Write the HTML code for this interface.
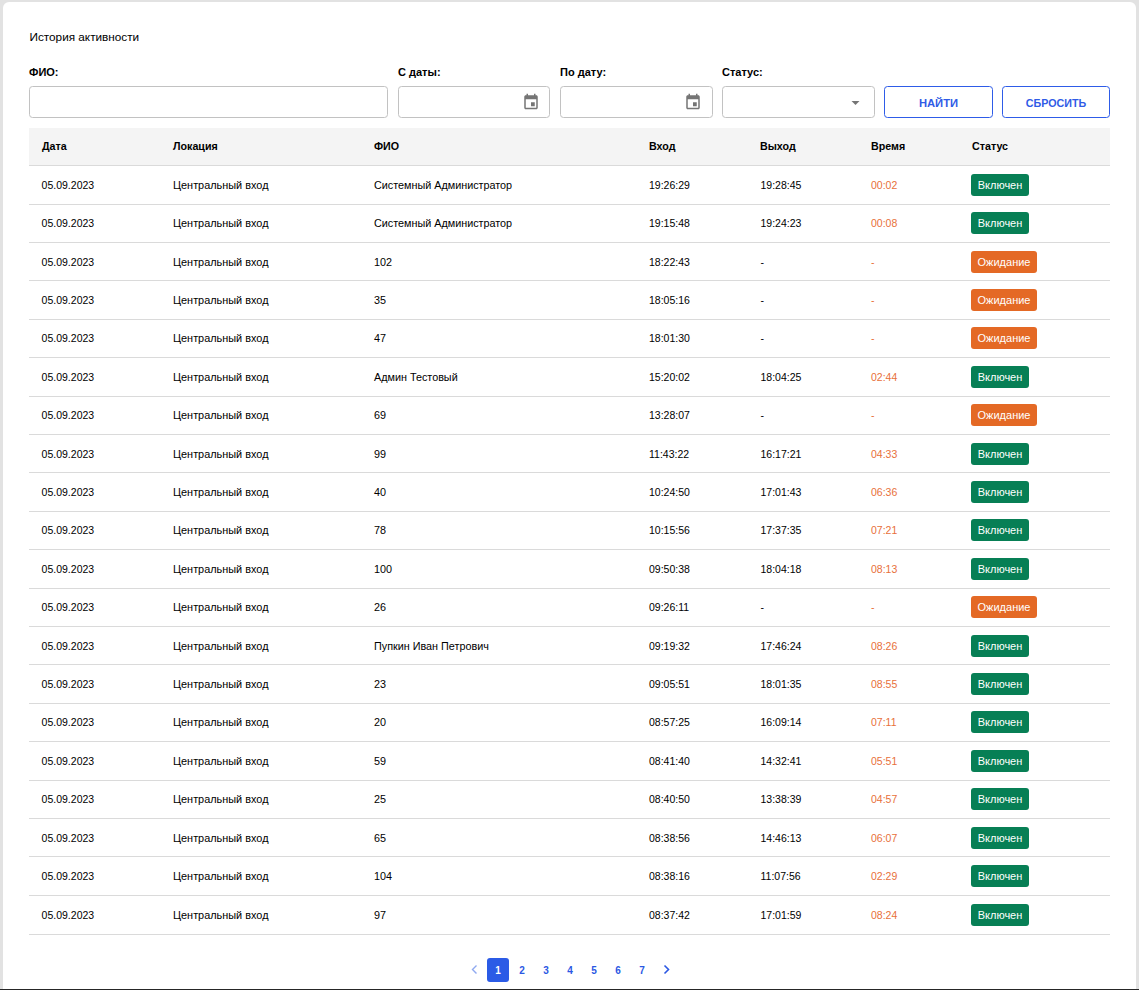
<!DOCTYPE html>
<html><head><meta charset="utf-8"><style>
*{margin:0;padding:0;box-sizing:border-box}
html,body{width:1139px;height:990px;overflow:hidden;background:#e2e2e2;font-family:"Liberation Sans",sans-serif;color:#000}
.card{position:absolute;left:3px;top:2px;width:1133px;height:987px;background:#fff;border-radius:6px 6px 0 0}
.bar{position:absolute;left:0;top:989px;width:1139px;height:1px;background:#262626}
.t{position:absolute;white-space:nowrap;line-height:14px;height:14px}
.b{font-weight:bold}
.inp{position:absolute;top:86px;height:32px;border:1px solid #c2c2c2;border-radius:3.5px;background:#fff}
.btn{position:absolute;top:86px;height:32px;border:1px solid #2e5ce8;border-radius:3.5px;background:#fff;color:#2f5be6;font-weight:bold;font-size:11px;text-align:center;line-height:32px}
.ic{position:absolute}
.hdr{position:absolute;left:29px;top:128px;width:1081px;height:37px;background:#f4f4f4}
.ln{position:absolute;left:29px;width:1081px;height:1px;background:#dadada}
.bdg{position:absolute;height:22px;border-radius:3px;color:#fff;font-size:11px;line-height:22px;text-align:center}
.g{background:#077f55}
.o{background:#e46925}
.or{color:#e8703a}
.pg{position:absolute;top:958px;width:22px;height:24px;padding-top:1px;text-align:center;line-height:24px;font-weight:bold;font-size:10px;color:#2b58e3}
</style></head><body>
<div class="card"></div>
<div class="bar"></div>

<div class="t" style="left:29.5px;top:30px;font-size:11.75px">История активности</div>
<div class="t b" style="left:29px;top:65px;font-size:11px">ФИО:</div>
<div class="t b" style="left:398px;top:65px;font-size:11px">С даты:</div>
<div class="t b" style="left:560px;top:65px;font-size:11px">По дату:</div>
<div class="t b" style="left:722px;top:65px;font-size:11px">Статус:</div>
<div class="inp" style="left:29px;width:359px"></div>
<div class="inp" style="left:398px;width:152px"></div>
<div class="inp" style="left:560px;width:153px"></div>
<div class="inp" style="left:722px;width:153px"></div>
<svg class="ic" style="left:522px;top:93px" width="18" height="18.7" viewBox="0 0 24 24" preserveAspectRatio="none"><path fill="#757575" d="M17 12h-5v5h5v-5zM16 1v2H8V1H6v2H5c-1.11 0-1.99.9-1.99 2L3 19c0 1.1.89 2 2 2h14c1.1 0 2-.9 2-2V5c0-1.1-.9-2-2-2h-1V1h-2zm3 18H5V8h14v11z"/></svg>
<svg class="ic" style="left:684px;top:93px" width="18" height="18.7" viewBox="0 0 24 24" preserveAspectRatio="none"><path fill="#757575" d="M17 12h-5v5h5v-5zM16 1v2H8V1H6v2H5c-1.11 0-1.99.9-1.99 2L3 19c0 1.1.89 2 2 2h14c1.1 0 2-.9 2-2V5c0-1.1-.9-2-2-2h-1V1h-2zm3 18H5V8h14v11z"/></svg>
<svg class="ic" style="left:851px;top:100px" width="9" height="5" viewBox="0 0 9 5"><path fill="#757575" d="M0.5 1h8l-4 4z"/></svg>
<div class="btn" style="left:884px;width:109px;font-size:11.2px">НАЙТИ</div>
<div class="btn" style="left:1002px;width:108px;font-size:10.7px">СБРОСИТЬ</div>
<div class="hdr"></div>
<div class="t b" style="left:42px;top:139px;font-size:10.7px">Дата</div>
<div class="t b" style="left:173px;top:139px;font-size:10.7px">Локация</div>
<div class="t b" style="left:374px;top:139px;font-size:10.7px">ФИО</div>
<div class="t b" style="left:649px;top:139px;font-size:10.7px">Вход</div>
<div class="t b" style="left:760px;top:139px;font-size:10.7px">Выход</div>
<div class="t b" style="left:871px;top:139px;font-size:10.7px">Время</div>
<div class="t b" style="left:972px;top:139px;font-size:10.7px">Статус</div>
<div class="ln" style="top:165px"></div>
<div class="ln" style="top:204px"></div>
<div class="t" style="left:41.6px;top:178.00px;font-size:10.5px">05.09.2023</div>
<div class="t" style="left:173px;top:178.00px;font-size:10.9px">Центральный вход</div>
<div class="t" style="left:374px;top:178.00px;font-size:10.8px">Системный Администратор</div>
<div class="t" style="left:649px;top:178.00px;font-size:10.5px">19:26:29</div>
<div class="t" style="left:760.5px;top:178.00px;font-size:10.5px">19:28:45</div>
<div class="t or" style="left:871px;top:178.00px;font-size:10.5px">00:02</div>
<div class="bdg g" style="left:971px;width:58px;top:174.00px">Включен</div>
<div class="ln" style="top:242px"></div>
<div class="t" style="left:41.6px;top:216.00px;font-size:10.5px">05.09.2023</div>
<div class="t" style="left:173px;top:216.00px;font-size:10.9px">Центральный вход</div>
<div class="t" style="left:374px;top:216.00px;font-size:10.8px">Системный Администратор</div>
<div class="t" style="left:649px;top:216.00px;font-size:10.5px">19:15:48</div>
<div class="t" style="left:760.5px;top:216.00px;font-size:10.5px">19:24:23</div>
<div class="t or" style="left:871px;top:216.00px;font-size:10.5px">00:08</div>
<div class="bdg g" style="left:971px;width:58px;top:212.00px">Включен</div>
<div class="ln" style="top:280px"></div>
<div class="t" style="left:41.6px;top:255.00px;font-size:10.5px">05.09.2023</div>
<div class="t" style="left:173px;top:255.00px;font-size:10.9px">Центральный вход</div>
<div class="t" style="left:374px;top:255.00px;font-size:10.8px">102</div>
<div class="t" style="left:649px;top:255.00px;font-size:10.5px">18:22:43</div>
<div class="t" style="left:760.5px;top:255.00px;font-size:10.5px">-</div>
<div class="t or" style="left:871px;top:255.00px;font-size:10.5px">-</div>
<div class="bdg o" style="left:971px;width:66px;top:251.00px">Ожидание</div>
<div class="ln" style="top:319px"></div>
<div class="t" style="left:41.6px;top:293.00px;font-size:10.5px">05.09.2023</div>
<div class="t" style="left:173px;top:293.00px;font-size:10.9px">Центральный вход</div>
<div class="t" style="left:374px;top:293.00px;font-size:10.8px">35</div>
<div class="t" style="left:649px;top:293.00px;font-size:10.5px">18:05:16</div>
<div class="t" style="left:760.5px;top:293.00px;font-size:10.5px">-</div>
<div class="t or" style="left:871px;top:293.00px;font-size:10.5px">-</div>
<div class="bdg o" style="left:971px;width:66px;top:289.00px">Ожидание</div>
<div class="ln" style="top:357px"></div>
<div class="t" style="left:41.6px;top:331.00px;font-size:10.5px">05.09.2023</div>
<div class="t" style="left:173px;top:331.00px;font-size:10.9px">Центральный вход</div>
<div class="t" style="left:374px;top:331.00px;font-size:10.8px">47</div>
<div class="t" style="left:649px;top:331.00px;font-size:10.5px">18:01:30</div>
<div class="t" style="left:760.5px;top:331.00px;font-size:10.5px">-</div>
<div class="t or" style="left:871px;top:331.00px;font-size:10.5px">-</div>
<div class="bdg o" style="left:971px;width:66px;top:327.00px">Ожидание</div>
<div class="ln" style="top:396px"></div>
<div class="t" style="left:41.6px;top:370.00px;font-size:10.5px">05.09.2023</div>
<div class="t" style="left:173px;top:370.00px;font-size:10.9px">Центральный вход</div>
<div class="t" style="left:374px;top:370.00px;font-size:10.8px">Админ Тестовый</div>
<div class="t" style="left:649px;top:370.00px;font-size:10.5px">15:20:02</div>
<div class="t" style="left:760.5px;top:370.00px;font-size:10.5px">18:04:25</div>
<div class="t or" style="left:871px;top:370.00px;font-size:10.5px">02:44</div>
<div class="bdg g" style="left:971px;width:58px;top:366.00px">Включен</div>
<div class="ln" style="top:434px"></div>
<div class="t" style="left:41.6px;top:408.00px;font-size:10.5px">05.09.2023</div>
<div class="t" style="left:173px;top:408.00px;font-size:10.9px">Центральный вход</div>
<div class="t" style="left:374px;top:408.00px;font-size:10.8px">69</div>
<div class="t" style="left:649px;top:408.00px;font-size:10.5px">13:28:07</div>
<div class="t" style="left:760.5px;top:408.00px;font-size:10.5px">-</div>
<div class="t or" style="left:871px;top:408.00px;font-size:10.5px">-</div>
<div class="bdg o" style="left:971px;width:66px;top:404.00px">Ожидание</div>
<div class="ln" style="top:472px"></div>
<div class="t" style="left:41.6px;top:447.00px;font-size:10.5px">05.09.2023</div>
<div class="t" style="left:173px;top:447.00px;font-size:10.9px">Центральный вход</div>
<div class="t" style="left:374px;top:447.00px;font-size:10.8px">99</div>
<div class="t" style="left:649px;top:447.00px;font-size:10.5px">11:43:22</div>
<div class="t" style="left:760.5px;top:447.00px;font-size:10.5px">16:17:21</div>
<div class="t or" style="left:871px;top:447.00px;font-size:10.5px">04:33</div>
<div class="bdg g" style="left:971px;width:58px;top:443.00px">Включен</div>
<div class="ln" style="top:511px"></div>
<div class="t" style="left:41.6px;top:485.00px;font-size:10.5px">05.09.2023</div>
<div class="t" style="left:173px;top:485.00px;font-size:10.9px">Центральный вход</div>
<div class="t" style="left:374px;top:485.00px;font-size:10.8px">40</div>
<div class="t" style="left:649px;top:485.00px;font-size:10.5px">10:24:50</div>
<div class="t" style="left:760.5px;top:485.00px;font-size:10.5px">17:01:43</div>
<div class="t or" style="left:871px;top:485.00px;font-size:10.5px">06:36</div>
<div class="bdg g" style="left:971px;width:58px;top:481.00px">Включен</div>
<div class="ln" style="top:549px"></div>
<div class="t" style="left:41.6px;top:523.00px;font-size:10.5px">05.09.2023</div>
<div class="t" style="left:173px;top:523.00px;font-size:10.9px">Центральный вход</div>
<div class="t" style="left:374px;top:523.00px;font-size:10.8px">78</div>
<div class="t" style="left:649px;top:523.00px;font-size:10.5px">10:15:56</div>
<div class="t" style="left:760.5px;top:523.00px;font-size:10.5px">17:37:35</div>
<div class="t or" style="left:871px;top:523.00px;font-size:10.5px">07:21</div>
<div class="bdg g" style="left:971px;width:58px;top:519.00px">Включен</div>
<div class="ln" style="top:588px"></div>
<div class="t" style="left:41.6px;top:562.00px;font-size:10.5px">05.09.2023</div>
<div class="t" style="left:173px;top:562.00px;font-size:10.9px">Центральный вход</div>
<div class="t" style="left:374px;top:562.00px;font-size:10.8px">100</div>
<div class="t" style="left:649px;top:562.00px;font-size:10.5px">09:50:38</div>
<div class="t" style="left:760.5px;top:562.00px;font-size:10.5px">18:04:18</div>
<div class="t or" style="left:871px;top:562.00px;font-size:10.5px">08:13</div>
<div class="bdg g" style="left:971px;width:58px;top:558.00px">Включен</div>
<div class="ln" style="top:626px"></div>
<div class="t" style="left:41.6px;top:600.00px;font-size:10.5px">05.09.2023</div>
<div class="t" style="left:173px;top:600.00px;font-size:10.9px">Центральный вход</div>
<div class="t" style="left:374px;top:600.00px;font-size:10.8px">26</div>
<div class="t" style="left:649px;top:600.00px;font-size:10.5px">09:26:11</div>
<div class="t" style="left:760.5px;top:600.00px;font-size:10.5px">-</div>
<div class="t or" style="left:871px;top:600.00px;font-size:10.5px">-</div>
<div class="bdg o" style="left:971px;width:66px;top:596.00px">Ожидание</div>
<div class="ln" style="top:664px"></div>
<div class="t" style="left:41.6px;top:639.00px;font-size:10.5px">05.09.2023</div>
<div class="t" style="left:173px;top:639.00px;font-size:10.9px">Центральный вход</div>
<div class="t" style="left:374px;top:639.00px;font-size:10.8px">Пупкин Иван Петрович</div>
<div class="t" style="left:649px;top:639.00px;font-size:10.5px">09:19:32</div>
<div class="t" style="left:760.5px;top:639.00px;font-size:10.5px">17:46:24</div>
<div class="t or" style="left:871px;top:639.00px;font-size:10.5px">08:26</div>
<div class="bdg g" style="left:971px;width:58px;top:635.00px">Включен</div>
<div class="ln" style="top:703px"></div>
<div class="t" style="left:41.6px;top:677.00px;font-size:10.5px">05.09.2023</div>
<div class="t" style="left:173px;top:677.00px;font-size:10.9px">Центральный вход</div>
<div class="t" style="left:374px;top:677.00px;font-size:10.8px">23</div>
<div class="t" style="left:649px;top:677.00px;font-size:10.5px">09:05:51</div>
<div class="t" style="left:760.5px;top:677.00px;font-size:10.5px">18:01:35</div>
<div class="t or" style="left:871px;top:677.00px;font-size:10.5px">08:55</div>
<div class="bdg g" style="left:971px;width:58px;top:673.00px">Включен</div>
<div class="ln" style="top:741px"></div>
<div class="t" style="left:41.6px;top:715.00px;font-size:10.5px">05.09.2023</div>
<div class="t" style="left:173px;top:715.00px;font-size:10.9px">Центральный вход</div>
<div class="t" style="left:374px;top:715.00px;font-size:10.8px">20</div>
<div class="t" style="left:649px;top:715.00px;font-size:10.5px">08:57:25</div>
<div class="t" style="left:760.5px;top:715.00px;font-size:10.5px">16:09:14</div>
<div class="t or" style="left:871px;top:715.00px;font-size:10.5px">07:11</div>
<div class="bdg g" style="left:971px;width:58px;top:711.00px">Включен</div>
<div class="ln" style="top:780px"></div>
<div class="t" style="left:41.6px;top:754.00px;font-size:10.5px">05.09.2023</div>
<div class="t" style="left:173px;top:754.00px;font-size:10.9px">Центральный вход</div>
<div class="t" style="left:374px;top:754.00px;font-size:10.8px">59</div>
<div class="t" style="left:649px;top:754.00px;font-size:10.5px">08:41:40</div>
<div class="t" style="left:760.5px;top:754.00px;font-size:10.5px">14:32:41</div>
<div class="t or" style="left:871px;top:754.00px;font-size:10.5px">05:51</div>
<div class="bdg g" style="left:971px;width:58px;top:750.00px">Включен</div>
<div class="ln" style="top:818px"></div>
<div class="t" style="left:41.6px;top:792.00px;font-size:10.5px">05.09.2023</div>
<div class="t" style="left:173px;top:792.00px;font-size:10.9px">Центральный вход</div>
<div class="t" style="left:374px;top:792.00px;font-size:10.8px">25</div>
<div class="t" style="left:649px;top:792.00px;font-size:10.5px">08:40:50</div>
<div class="t" style="left:760.5px;top:792.00px;font-size:10.5px">13:38:39</div>
<div class="t or" style="left:871px;top:792.00px;font-size:10.5px">04:57</div>
<div class="bdg g" style="left:971px;width:58px;top:788.00px">Включен</div>
<div class="ln" style="top:856px"></div>
<div class="t" style="left:41.6px;top:831.00px;font-size:10.5px">05.09.2023</div>
<div class="t" style="left:173px;top:831.00px;font-size:10.9px">Центральный вход</div>
<div class="t" style="left:374px;top:831.00px;font-size:10.8px">65</div>
<div class="t" style="left:649px;top:831.00px;font-size:10.5px">08:38:56</div>
<div class="t" style="left:760.5px;top:831.00px;font-size:10.5px">14:46:13</div>
<div class="t or" style="left:871px;top:831.00px;font-size:10.5px">06:07</div>
<div class="bdg g" style="left:971px;width:58px;top:827.00px">Включен</div>
<div class="ln" style="top:895px"></div>
<div class="t" style="left:41.6px;top:869.00px;font-size:10.5px">05.09.2023</div>
<div class="t" style="left:173px;top:869.00px;font-size:10.9px">Центральный вход</div>
<div class="t" style="left:374px;top:869.00px;font-size:10.8px">104</div>
<div class="t" style="left:649px;top:869.00px;font-size:10.5px">08:38:16</div>
<div class="t" style="left:760.5px;top:869.00px;font-size:10.5px">11:07:56</div>
<div class="t or" style="left:871px;top:869.00px;font-size:10.5px">02:29</div>
<div class="bdg g" style="left:971px;width:58px;top:865.00px">Включен</div>
<div class="ln" style="top:934px"></div>
<div class="t" style="left:41.6px;top:908.00px;font-size:10.5px">05.09.2023</div>
<div class="t" style="left:173px;top:908.00px;font-size:10.9px">Центральный вход</div>
<div class="t" style="left:374px;top:908.00px;font-size:10.8px">97</div>
<div class="t" style="left:649px;top:908.00px;font-size:10.5px">08:37:42</div>
<div class="t" style="left:760.5px;top:908.00px;font-size:10.5px">17:01:59</div>
<div class="t or" style="left:871px;top:908.00px;font-size:10.5px">08:24</div>
<div class="bdg g" style="left:971px;width:58px;top:904.00px">Включен</div>
<svg class="ic" style="left:470px;top:964px" width="9" height="11" viewBox="0 0 9 11"><path fill="none" stroke="#8fa9f0" stroke-width="1.4" d="M6.5 1.5L2.5 5.5L6.5 9.5"/></svg>
<div class="pg" style="left:487px;background:#2b5be6;color:#fff;border-radius:3px">1</div>
<div class="pg" style="left:511px">2</div>
<div class="pg" style="left:535px">3</div>
<div class="pg" style="left:559px">4</div>
<div class="pg" style="left:583px">5</div>
<div class="pg" style="left:607px">6</div>
<div class="pg" style="left:631px">7</div>
<svg class="ic" style="left:662px;top:964px" width="9" height="11" viewBox="0 0 9 11"><path fill="none" stroke="#2b58e3" stroke-width="1.6" d="M2.5 1.5L6.5 5.5L2.5 9.5"/></svg>
</body></html>
